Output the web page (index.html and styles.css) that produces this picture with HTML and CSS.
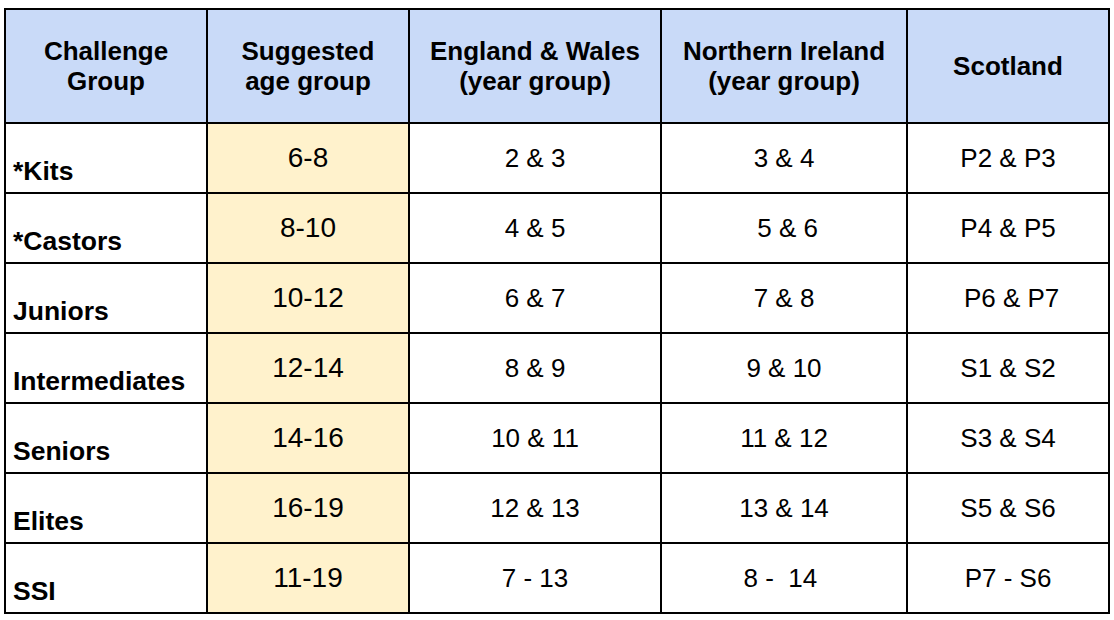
FILE: index.html
```html
<!DOCTYPE html>
<html lang="en">
<head>
<meta charset="utf-8">
<title>Challenge Groups</title>
<link rel="stylesheet" href="styles.css">
</head>
<body>
<div class="table">
  <div class="cell head">Challenge<br>Group</div>
  <div class="cell head">Suggested<br>age group</div>
  <div class="cell head">England &amp; Wales<br>(year group)</div>
  <div class="cell head">Northern Ireland<br>(year group)</div>
  <div class="cell head">Scotland</div>

  <div class="cell name">*Kits</div>
  <div class="cell age">6-8</div>
  <div class="cell val">2 &amp; 3</div>
  <div class="cell val">3 &amp; 4</div>
  <div class="cell val">P2 &amp; P3</div>

  <div class="cell name">*Castors</div>
  <div class="cell age">8-10</div>
  <div class="cell val">4 &amp; 5</div>
  <div class="cell val"> 5 &amp; 6</div>
  <div class="cell val">P4 &amp; P5</div>

  <div class="cell name">Juniors</div>
  <div class="cell age">10-12</div>
  <div class="cell val">6 &amp; 7</div>
  <div class="cell val">7 &amp; 8</div>
  <div class="cell val"> P6 &amp; P7</div>

  <div class="cell name">Intermediates</div>
  <div class="cell age">12-14</div>
  <div class="cell val">8 &amp; 9</div>
  <div class="cell val">9 &amp; 10</div>
  <div class="cell val">S1 &amp; S2</div>

  <div class="cell name">Seniors</div>
  <div class="cell age">14-16</div>
  <div class="cell val">10 &amp; 11</div>
  <div class="cell val">11 &amp; 12</div>
  <div class="cell val">S3 &amp; S4</div>

  <div class="cell name">Elites</div>
  <div class="cell age">16-19</div>
  <div class="cell val">12 &amp; 13</div>
  <div class="cell val">13 &amp; 14</div>
  <div class="cell val">S5 &amp; S6</div>

  <div class="cell name">SSI</div>
  <div class="cell age">11-19</div>
  <div class="cell val">7 - 13</div>
  <div class="cell val">8 -  14 </div>
  <div class="cell val">P7 - S6</div>
</div>
</body>
</html>
```

FILE: styles.css
```css
html, body {
  margin: 0;
  padding: 0;
  background: #ffffff;
}

body {
  font-family: "Liberation Sans", Arial, sans-serif;
  color: #000000;
}

.table {
  display: grid;
  grid-template-columns: 202px 202px 252px 246px 202px;
  grid-template-rows: 114px repeat(7, 70px);
  width: max-content;
  margin: 8px 0 0 4px;
  border-top: 2px solid #000;
  border-left: 2px solid #000;
}

.cell {
  box-sizing: border-box;
  border-right: 2px solid #000;
  border-bottom: 2px solid #000;
  display: flex;
  align-items: center;
  justify-content: center;
  text-align: center;
  white-space: pre;
}

.head {
  background: #c9daf8;
  font-weight: bold;
  font-size: 26px;
  line-height: 30px;
  white-space: normal;
}

.name {
  justify-content: flex-start;
  align-items: flex-end;
  text-align: left;
  padding: 0 0 6px 7px;
  font-weight: bold;
  font-size: 26.5px;
  line-height: 30px;
}

.age {
  background: #fff2cc;
  font-size: 28px;
}

.val {
  font-size: 26px;
  line-height: 30px;
}
```
